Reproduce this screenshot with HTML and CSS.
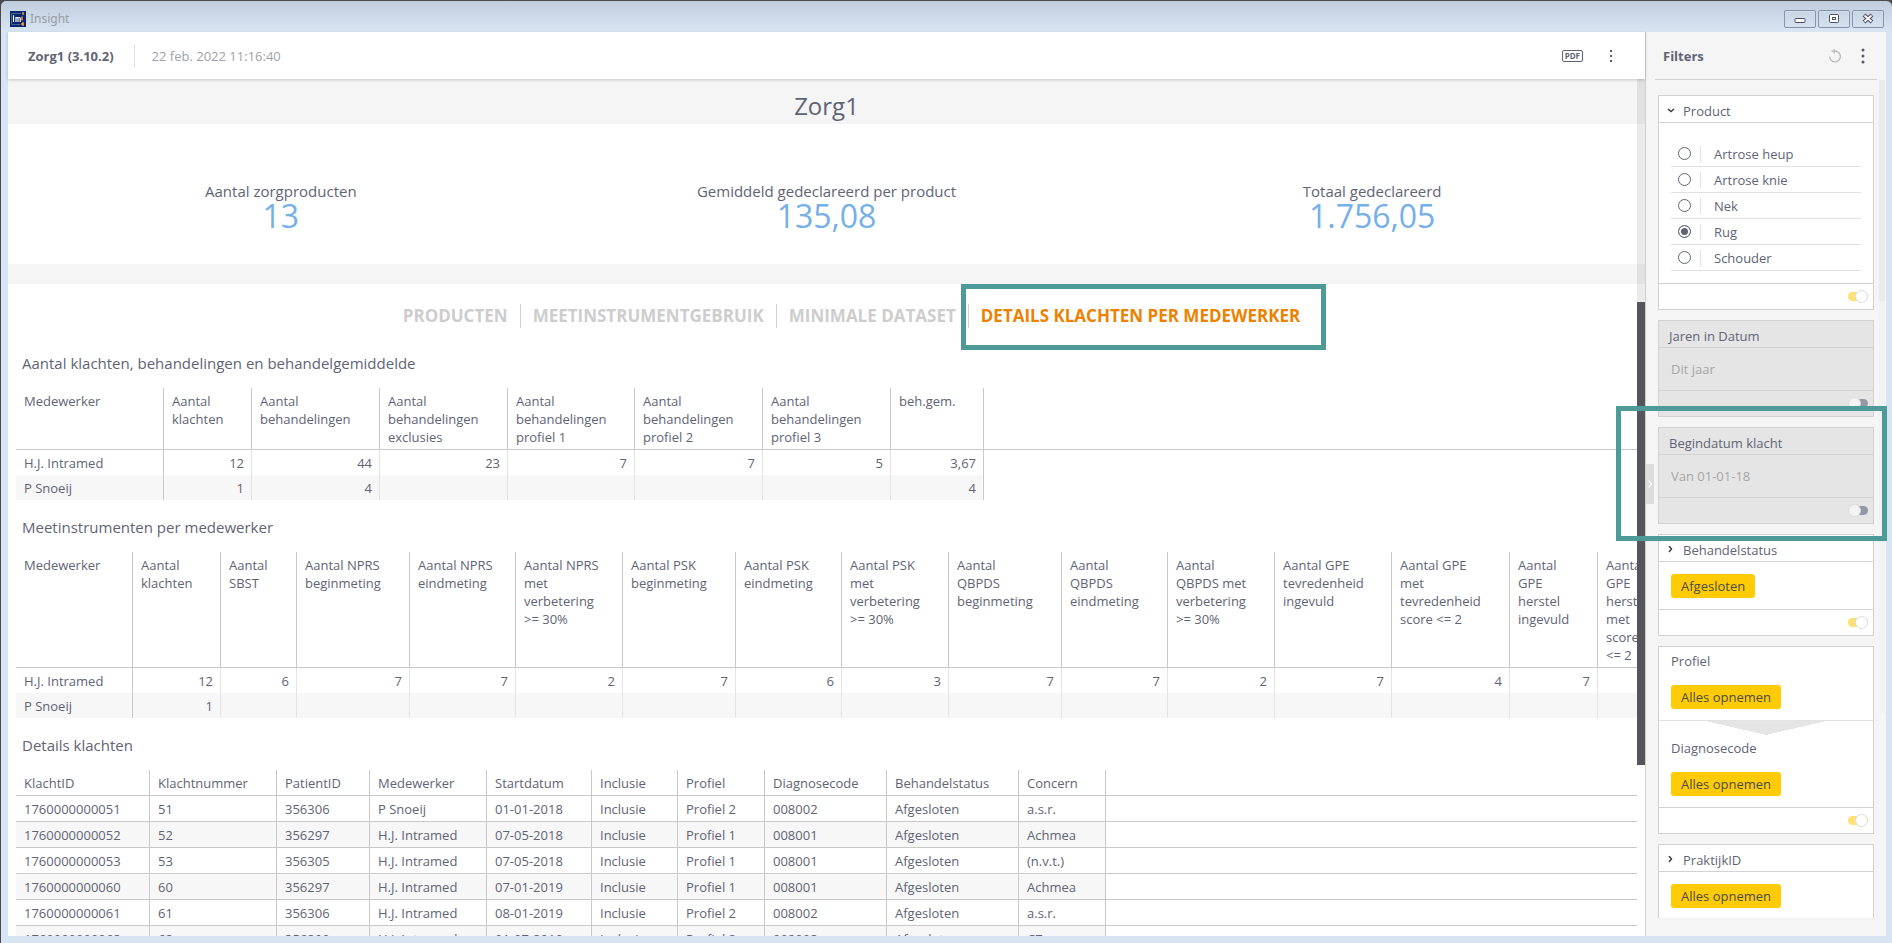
FILE: index.html
```html
<!DOCTYPE html>
<html lang="nl">
<head>
    <meta charset="UTF-8">
    <meta name="viewport" content="width=device-width, initial-scale=1.0">
    <title>Insight</title>
    <link rel="stylesheet" href="styles.css">
</head>
<body>

<div class="window">
    <div class="titlebar">
        <svg class="app-icon" width="16" height="16" viewBox="0 0 16 16" aria-hidden="true">
            <rect width="16" height="16" fill="#0b2472"/>
            <path d="M1 2.5h10M1.500 13.500h9M1.500 3v10" stroke="#3f6a8c" stroke-width="1" fill="none"/>
            <path d="M3.500 5v6M3.500 4v.8M6 11V6M6 7.200q1.200-1.400 2 0V11M8 7.200q1.200-1.400 2.200 0V11" stroke="#fff" stroke-width="1.200" fill="none"/>
            <path d="M13 1v3M12 5.500v4M13 11v4M11 13h3" stroke="#f39a1c" stroke-width="1.500" fill="none"/>
        </svg>
        <span class="window-title">Insight</span>
        <div class="window-buttons">
            <button type="button" aria-label="Minimaliseren">
                <svg width="12" height="12" viewBox="0 0 12 12"><rect x="1" y="5.500" width="10" height="4" rx="1" fill="#fff" stroke="#4b5163"/></svg>
            </button>
            <button type="button" aria-label="Maximaliseren">
                <svg width="12" height="12" viewBox="0 0 12 12"><rect x="1.500" y="1.500" width="9" height="8" rx="1" fill="#fff" stroke="#4b5163"/><rect x="4.500" y="4.500" width="3" height="2" fill="#fff" stroke="#4b5163"/></svg>
            </button>
            <button type="button" aria-label="Sluiten">
                <svg width="12" height="12" viewBox="0 0 12 12"><path d="M2 2l8 7M10 2L2 9" stroke="#4b5163" stroke-width="4"/><path d="M2.500 2.500l7 6M9.500 2.500l-7 6" stroke="#fff" stroke-width="1.800"/></svg>
            </button>
        </div>
    </div>

    <div class="content">
        <main class="report">
            <header class="report-header">
                <strong class="report-name">Zorg1 (3.10.2)</strong>
                <span class="report-date">22 feb. 2022 11:16:40</span>
                <div class="report-actions">
                    <button type="button" class="pdf-button">PDF</button>
                    <button type="button" class="icon-button" aria-label="Menu">
                        <svg width="4" height="14" viewBox="0 0 4 14" fill="#565a6c"><rect x="1" y="1" width="2" height="2"/><rect x="1" y="6" width="2" height="2"/><rect x="1" y="11" width="2" height="2"/></svg>
                    </button>
                </div>
            </header>

            <div class="report-body">
                <h1>Zorg1</h1>

                <section class="kpis">
                    <div class="kpi"><span class="kpi-label">Aantal zorgproducten</span><span class="kpi-value">13</span></div>
                    <div class="kpi"><span class="kpi-label">Gemiddeld gedeclareerd per product</span><span class="kpi-value">135,08</span></div>
                    <div class="kpi"><span class="kpi-label">Totaal gedeclareerd</span><span class="kpi-value">1.756,05</span></div>
                </section>

                <section class="tables">
                    <nav class="tabs">
                        <a href="#">PRODUCTEN</a>
                        <a href="#">MEETINSTRUMENTGEBRUIK</a>
                        <a href="#">MINIMALE DATASET</a>
                        <a href="#" class="active">DETAILS KLACHTEN PER MEDEWERKER<span class="marker marker-tab"></span></a>
                    </nav>

                    <h2>Aantal klachten, behandelingen en behandelgemiddelde</h2>
                    <table class="summary">
                        <colgroup>
                            <col class="w148"><col class="w88"><col class="w128"><col class="w128"><col class="w127"><col class="w128"><col class="w128"><col class="w93"><col>
                        </colgroup>
                        <thead>
                            <tr>
                                <th>Medewerker</th>
                                <th>Aantal<br>klachten</th>
                                <th>Aantal<br>behandelingen</th>
                                <th>Aantal<br>behandelingen<br>exclusies</th>
                                <th>Aantal<br>behandelingen<br>profiel 1</th>
                                <th>Aantal<br>behandelingen<br>profiel 2</th>
                                <th>Aantal<br>behandelingen<br>profiel 3</th>
                                <th>beh.gem.</th>
                                <th class="rest"></th>
                            </tr>
                        </thead>
                        <tbody>
                            <tr><td>H.J. Intramed</td><td>12</td><td>44</td><td>23</td><td>7</td><td>7</td><td>5</td><td class="last">3,67</td><td class="rest"></td></tr>
                            <tr><td>P Snoeij</td><td>1</td><td>4</td><td></td><td></td><td></td><td></td><td class="last">4</td><td class="rest"></td></tr>
                        </tbody>
                    </table>

                    <h2>Meetinstrumenten per medewerker</h2>
                    <table class="summary">
                        <colgroup>
                            <col class="w117"><col class="w88"><col class="w76"><col class="w113"><col class="w106"><col class="w107"><col class="w113"><col class="w106"><col class="w107"><col class="w113"><col class="w106"><col class="w107"><col class="w117"><col class="w118"><col class="w88"><col class="w88">
                        </colgroup>
                        <thead>
                            <tr>
                                <th>Medewerker</th>
                                <th>Aantal<br>klachten</th>
                                <th>Aantal<br>SBST</th>
                                <th>Aantal NPRS<br>beginmeting</th>
                                <th>Aantal NPRS<br>eindmeting</th>
                                <th>Aantal NPRS<br>met<br>verbetering<br>&gt;= 30%</th>
                                <th>Aantal PSK<br>beginmeting</th>
                                <th>Aantal PSK<br>eindmeting</th>
                                <th>Aantal PSK<br>met<br>verbetering<br>&gt;= 30%</th>
                                <th>Aantal<br>QBPDS<br>beginmeting</th>
                                <th>Aantal<br>QBPDS<br>eindmeting</th>
                                <th>Aantal<br>QBPDS met<br>verbetering<br>&gt;= 30%</th>
                                <th>Aantal GPE<br>tevredenheid<br>ingevuld</th>
                                <th>Aantal GPE<br>met<br>tevredenheid<br>score &lt;= 2</th>
                                <th>Aantal<br>GPE<br>herstel<br>ingevuld</th>
                                <th>Aantal<br>GPE<br>herstel<br>met<br>score<br>&lt;= 2</th>
                            </tr>
                        </thead>
                        <tbody>
                            <tr><td>H.J. Intramed</td><td>12</td><td>6</td><td>7</td><td>7</td><td>2</td><td>7</td><td>6</td><td>3</td><td>7</td><td>7</td><td>2</td><td>7</td><td>4</td><td>7</td><td></td></tr>
                            <tr><td>P Snoeij</td><td>1</td><td></td><td></td><td></td><td></td><td></td><td></td><td></td><td></td><td></td><td></td><td></td><td></td><td></td><td></td></tr>
                        </tbody>
                    </table>

                    <h2>Details klachten</h2>
                    <table class="details">
                        <colgroup>
                            <col class="w134"><col class="w127"><col class="w93"><col class="w117"><col class="w105"><col class="w86"><col class="w87"><col class="w122"><col class="w132"><col class="w87"><col>
                        </colgroup>
                        <thead>
                            <tr><th>KlachtID</th><th>Klachtnummer</th><th>PatientID</th><th>Medewerker</th><th>Startdatum</th><th>Inclusie</th><th>Profiel</th><th>Diagnosecode</th><th>Behandelstatus</th><th>Concern</th><th class="rest"></th></tr>
                        </thead>
                        <tbody>
                            <tr><td>1760000000051</td><td>51</td><td>356306</td><td>P Snoeij</td><td>01-01-2018</td><td>Inclusie</td><td>Profiel 2</td><td>008002</td><td>Afgesloten</td><td>a.s.r.</td><td class="rest"></td></tr>
                            <tr><td>1760000000052</td><td>52</td><td>356297</td><td>H.J. Intramed</td><td>07-05-2018</td><td>Inclusie</td><td>Profiel 1</td><td>008001</td><td>Afgesloten</td><td>Achmea</td><td class="rest"></td></tr>
                            <tr><td>1760000000053</td><td>53</td><td>356305</td><td>H.J. Intramed</td><td>07-05-2018</td><td>Inclusie</td><td>Profiel 1</td><td>008001</td><td>Afgesloten</td><td>(n.v.t.)</td><td class="rest"></td></tr>
                            <tr><td>1760000000060</td><td>60</td><td>356297</td><td>H.J. Intramed</td><td>07-01-2019</td><td>Inclusie</td><td>Profiel 1</td><td>008001</td><td>Afgesloten</td><td>Achmea</td><td class="rest"></td></tr>
                            <tr><td>1760000000061</td><td>61</td><td>356306</td><td>H.J. Intramed</td><td>08-01-2019</td><td>Inclusie</td><td>Profiel 2</td><td>008002</td><td>Afgesloten</td><td>a.s.r.</td><td class="rest"></td></tr>
                            <tr><td>1760000000062</td><td>62</td><td>356299</td><td>H.J. Intramed</td><td>01-07-2019</td><td>Inclusie</td><td>Profiel 2</td><td>008002</td><td>Afgesloten</td><td>CZ</td><td class="rest"></td></tr>
                        </tbody>
                    </table>
                </section>
                <div class="scroll-track"></div>
                <div class="scroll-thumb"></div>
            </div>
        </main>

        <aside class="filters">
            <header class="filters-header">
                <strong>Filters</strong>
                <button type="button" class="icon-button" aria-label="Herstellen">
                    <svg width="14" height="16" viewBox="0 0 14 16" fill="none" stroke="#b4b4b4" stroke-width="1.200"><path d="M6 3.200A5.400 5.400 0 1 1 1.600 8.500"/><path d="M3.500 3.200h3.200M6.200 1v4.500"/></svg>
                </button>
                <button type="button" class="icon-button" aria-label="Menu">
                    <svg width="4" height="16" viewBox="0 0 4 16" fill="#565a6c"><circle cx="2" cy="2" r="1.500"/><circle cx="2" cy="8" r="1.500"/><circle cx="2" cy="14" r="1.500"/></svg>
                </button>
            </header>

            <div class="filter-list">
                <section class="card">
                    <h3>
                        <svg class="chevron" width="8" height="8" viewBox="0 0 8 8" fill="none" stroke="#3b3f4e" stroke-width="1.500"><path d="M1 2l3 2.500L7 2"/></svg>
                        Product
                    </h3>
                    <div class="options">
                        <label><input type="radio" name="product"><span>Artrose heup</span></label>
                        <label><input type="radio" name="product"><span>Artrose knie</span></label>
                        <label><input type="radio" name="product"><span>Nek</span></label>
                        <label><input type="radio" name="product" checked><span>Rug</span></label>
                        <label><input type="radio" name="product"><span>Schouder</span></label>
                    </div>
                    <div class="card-footer"><input type="checkbox" class="toggle" aria-label="Product actief" checked></div>
                </section>

                <section class="card disabled">
                    <h3>Jaren in Datum</h3>
                    <div class="card-text">Dit jaar</div>
                    <div class="card-footer"><input type="checkbox" class="toggle" aria-label="Jaren in Datum actief"></div>
                </section>

                <section class="card disabled">
                    <h3>Begindatum klacht</h3>
                    <div class="card-text">Van 01-01-18</div>
                    <div class="card-footer"><input type="checkbox" class="toggle" aria-label="Begindatum klacht actief"></div>
                    <span class="marker marker-filter"></span>
                </section>

                <section class="card">
                    <h3>
                        <svg class="chevron" width="8" height="8" viewBox="0 0 8 8" fill="none" stroke="#3b3f4e" stroke-width="1.500"><path d="M2 0l2.500 3L2 6"/></svg>
                        Behandelstatus
                    </h3>
                    <div class="card-body"><button type="button" class="tag">Afgesloten</button></div>
                    <div class="card-footer"><input type="checkbox" class="toggle" aria-label="Behandelstatus actief" checked></div>
                </section>

                <section class="card">
                    <div class="level">
                        <h4>Profiel</h4>
                        <button type="button" class="tag">Alles opnemen</button>
                    </div>
                    <div class="level level-next">
                        <h4>Diagnosecode</h4>
                        <button type="button" class="tag">Alles opnemen</button>
                    </div>
                    <div class="card-footer"><input type="checkbox" class="toggle" aria-label="Profiel actief" checked></div>
                </section>

                <section class="card">
                    <h3>
                        <svg class="chevron" width="8" height="8" viewBox="0 0 8 8" fill="none" stroke="#3b3f4e" stroke-width="1.500"><path d="M2 0l2.500 3L2 6"/></svg>
                        PraktijkID
                    </h3>
                    <div class="card-body"><button type="button" class="tag">Alles opnemen</button></div>
                    <div class="card-footer"><input type="checkbox" class="toggle" aria-label="PraktijkID actief" checked></div>
                </section>
            </div>

            <div class="filter-track"><div class="filter-thumb"></div></div>
            <button type="button" class="collapse" aria-label="Filters inklappen">
                <svg width="8" height="10" viewBox="0 0 8 10" fill="none" stroke="#fff" stroke-width="1.200"><path d="M2.500 1.500l3 3.500-3 3.500"/></svg>
            </button>
        </aside>
    </div>
</div>

</body>
</html>
```

FILE: styles.css
```css
* {
    box-sizing: border-box;
}
body {
    margin: 0;
    background: #4a4a50;
    color: #5f6475;
    font-family: "Open Sans", "Noto Sans", sans-serif;
    font-size: 13px;
    line-height: 18px;
}
h1, h2, h3, h4 {
    margin: 0;
    font-weight: normal;
}
button {
    margin: 0;
    padding: 0;
    border: none;
    background: none;
    color: inherit;
    font: inherit;
    cursor: pointer;
}
svg {
    display: block;
}

/* window frame */
.window {
    display: flex;
    flex-direction: column;
    height: 100vh;
    padding: 0 6px 7px;
    border-top: 1px solid #4a4a50;
    border-left: 1px solid #4a4a50;
    border-radius: 6px 6px 0 0;
    background: linear-gradient(#bfcddd, #d7e4f2 30px);
    overflow: hidden;
}
.titlebar {
    display: flex;
    flex: none;
    align-items: center;
    height: 31px;
    padding: 5px 2px 0 3px;
}
.window-title {
    flex: 1;
    margin-left: 4px;
    color: #999b9f;
    font-family: "Noto Sans", sans-serif;
    font-size: 12px;
}
.window-buttons {
    display: flex;
    gap: 2px;
}
.window-buttons button {
    display: flex;
    align-items: center;
    justify-content: center;
    width: 32px;
    height: 18px;
    border: 1px solid #8393ae;
    border-radius: 2px;
    box-shadow: inset 0 0 0 1px #d3deeb;
}
.content {
    display: flex;
    flex: 1;
    min-height: 0;
}

/* report */
.report {
    display: flex;
    flex: 1;
    flex-direction: column;
    min-width: 0;
    margin-left: 1px;
    background: #fff;
}
.report-header {
    z-index: 1;
    display: flex;
    flex: none;
    align-items: center;
    height: 47px;
    padding: 0 32px 0 20px;
    background: #fff;
    box-shadow: 0 1px 3px rgba(0, 0, 0, 0.2);
}
.report-name {
    padding-right: 20px;
    line-height: 24px;
    border-right: 1px solid #e3e3e3;
}
.report-date {
    flex: 1;
    padding-left: 17px;
    color: #a0a2aa;
}
.report-actions {
    display: flex;
    align-items: center;
    gap: 26px;
}
.pdf-button {
    height: 12px;
    padding: 0 2px;
    border: 1px solid #5f6475;
    border-radius: 2px;
    font-size: 8px;
    font-weight: bold;
    line-height: 10px;
}
.report-body {
    position: relative;
    flex: 1;
    min-height: 0;
    overflow: hidden;
}
h1 {
    padding: 11px 0 2px;
    background: #f5f5f5;
    font-size: 24px;
    line-height: 32px;
    text-align: center;
}
.kpis {
    display: flex;
    height: 140px;
    padding-top: 57px;
}
.kpi {
    display: flex;
    flex: 1;
    flex-direction: column;
    align-items: center;
}
.kpi-label {
    font-size: 15px;
    line-height: 20px;
}
.kpi-value {
    color: #76b0e8;
    font-size: 32px;
    line-height: 30px;
}
.tables {
    padding-left: 8px;
    padding-right: 8px;
    border-top: 20px solid #f5f5f5;
    overflow: hidden;
}

/* tabs */
.tabs {
    display: flex;
    justify-content: center;
    padding: 20px 0 8px 50px;
}
.tabs a {
    position: relative;
    padding: 0 12px;
    border-right: 1px solid #d0d0d0;
    color: #cdcdcd;
    font-size: 17px;
    font-weight: bold;
    line-height: 24px;
    text-decoration: none;
}
.tabs a:last-child {
    border-right: none;
}
.tabs a.active {
    color: #ec8200;
}
.marker {
    position: absolute;
    z-index: 2;
    border: 5px solid #4e9a99;
    pointer-events: none;
}
.marker-tab {
    top: -20px;
    right: -14px;
    bottom: -22px;
    left: -8px;
}
.marker-filter {
    top: -22px;
    right: -14px;
    bottom: -18px;
    left: -43px;
}

/* tables */
h2 {
    padding: 15px 6px 13px;
    font-size: 15px;
    line-height: 24px;
}
table {
    width: 100%;
    table-layout: fixed;
    border-collapse: separate;
    border-spacing: 0;
}
th, td {
    padding: 4px 7px 3px 8px;
    border-right: 1px solid #c9c9c9;
    font-weight: normal;
    text-align: left;
    vertical-align: top;
    white-space: nowrap;
}
td {
    height: 25px;
}
th {
    border-bottom: 1px solid #c9c9c9;
}
th.rest, td.rest {
    border-right: none;
}
tbody tr:nth-child(even) td:not(.rest) {
    background: #f7f7f7;
}
.summary td {
    border-right-color: #e4e4e4;
    text-align: right;
}
.summary td:first-child {
    border-right-color: #c9c9c9;
    text-align: left;
}
.summary td.last {
    border-right-color: #c9c9c9;
}
.details td {
    border-bottom: 1px solid #c9c9c9;
}
.w76 { width: 76px; }
.w86 { width: 86px; }
.w87 { width: 87px; }
.w88 { width: 88px; }
.w93 { width: 93px; }
.w105 { width: 105px; }
.w106 { width: 106px; }
.w107 { width: 107px; }
.w113 { width: 113px; }
.w117 { width: 117px; }
.w118 { width: 118px; }
.w122 { width: 122px; }
.w127 { width: 127px; }
.w128 { width: 128px; }
.w132 { width: 132px; }
.w134 { width: 134px; }
.w148 { width: 148px; }

/* scrollbar drawn over the report */
.scroll-track,
.scroll-thumb {
    position: absolute;
    right: 0;
    width: 8px;
}
.scroll-track {
    top: 0;
    height: 26%;
    background: rgba(0, 0, 0, 0.08);
}
.scroll-thumb {
    top: 26%;
    height: 54%;
    background: #56555c;
}

/* filters */
.filters {
    position: relative;
    display: flex;
    flex: none;
    flex-direction: column;
    width: 241px;
    padding-bottom: 18px;
    border-left: 1px solid #cfcfcf;
    background: #f5f5f5;
}
.filters-header {
    display: flex;
    flex: none;
    align-items: center;
    gap: 19px;
    height: 48px;
    margin: 0 9px;
    padding: 0 12px 0 8px;
    border-bottom: 1px solid #cfcfcf;
}
.filters-header strong {
    flex: 1;
}
.filter-list {
    display: flex;
    flex: 1;
    flex-direction: column;
    gap: 10px;
    min-height: 0;
    padding: 15px 12px 0;
    overflow-x: visible;
    overflow-y: clip;
}
.card {
    position: relative;
    flex: none;
    border: 1px solid #d2d2d2;
    background: #fff;
}
.card h3 {
    display: flex;
    align-items: center;
    gap: 8px;
    height: 27px;
    padding: 3px 8px 0;
    border-bottom: 1px solid #d2d2d2;
    font-size: 13px;
    line-height: 20px;
}
.card-footer {
    display: flex;
    align-items: center;
    justify-content: flex-end;
    height: 26px;
    padding-right: 5px;
    border-top: 1px solid #d2d2d2;
}
.card-body {
    padding: 12px 12px 11px;
}
.card-text {
    padding: 11px 12px;
    color: #a5a5a5;
    line-height: 20px;
}
.card.disabled {
    background: #e5e5e5;
}
.card.disabled h3 {
    padding-left: 10px;
}
.options {
    padding: 18px 12px 12px;
}
.options label {
    display: flex;
    align-items: center;
    height: 26px;
    padding-left: 7px;
    border-bottom: 1px solid #e2e2e2;
}
.options input {
    width: 13px;
    height: 13px;
    margin: 0 9px 0 0;
    border: 1px solid #5f6475;
    border-radius: 50%;
    background: #fff;
    appearance: none;
}
.options input:checked {
    background: #5f6475;
    box-shadow: inset 0 0 0 2px #fff;
}
.options span {
    padding-left: 13px;
    border-left: 1px solid #e2e2e2;
    line-height: 16px;
}
.toggle {
    display: flex;
    align-items: center;
    width: 20px;
    height: 9px;
    margin: 0;
    border-radius: 5px;
    background: linear-gradient(to right, transparent 5px, #9498a2 5px);
    appearance: none;
}
.toggle::before {
    flex: none;
    width: 11px;
    height: 11px;
    border: 1px solid #dcdcdc;
    border-radius: 50%;
    background: #f3f3f3;
    content: "";
}
.toggle:checked {
    justify-content: flex-end;
    background: #ffe073;
}
.toggle:checked::before {
    background: #fff;
}
.tag {
    display: block;
    height: 24px;
    padding: 0 10px;
    border-radius: 3px;
    background: #ffcb05;
    color: #4b4b4b;
    font-size: 13px;
    line-height: 24px;
}
.level {
    padding: 4px 12px 11px;
}
.level h4 {
    margin-bottom: 14px;
    line-height: 20px;
}
.level-next {
    padding-top: 17px;
    border-top: 1px solid #e2e2e2;
    background: conic-gradient(from -77deg at 50% 14px, #e5e5e5 154deg, transparent 0) center top / 132px 14px no-repeat;
}
.filter-track {
    position: absolute;
    top: 48px;
    right: 1px;
    width: 6px;
    height: 70%;
    background: #f2f2f2;
}
.filter-thumb {
    height: 35%;
    background: #ebebeb;
}
.collapse {
    position: absolute;
    top: calc(50% - 20px);
    left: 0;
    display: flex;
    align-items: center;
    width: 8px;
    height: 40px;
    background: #dcdcdc;
}
```
